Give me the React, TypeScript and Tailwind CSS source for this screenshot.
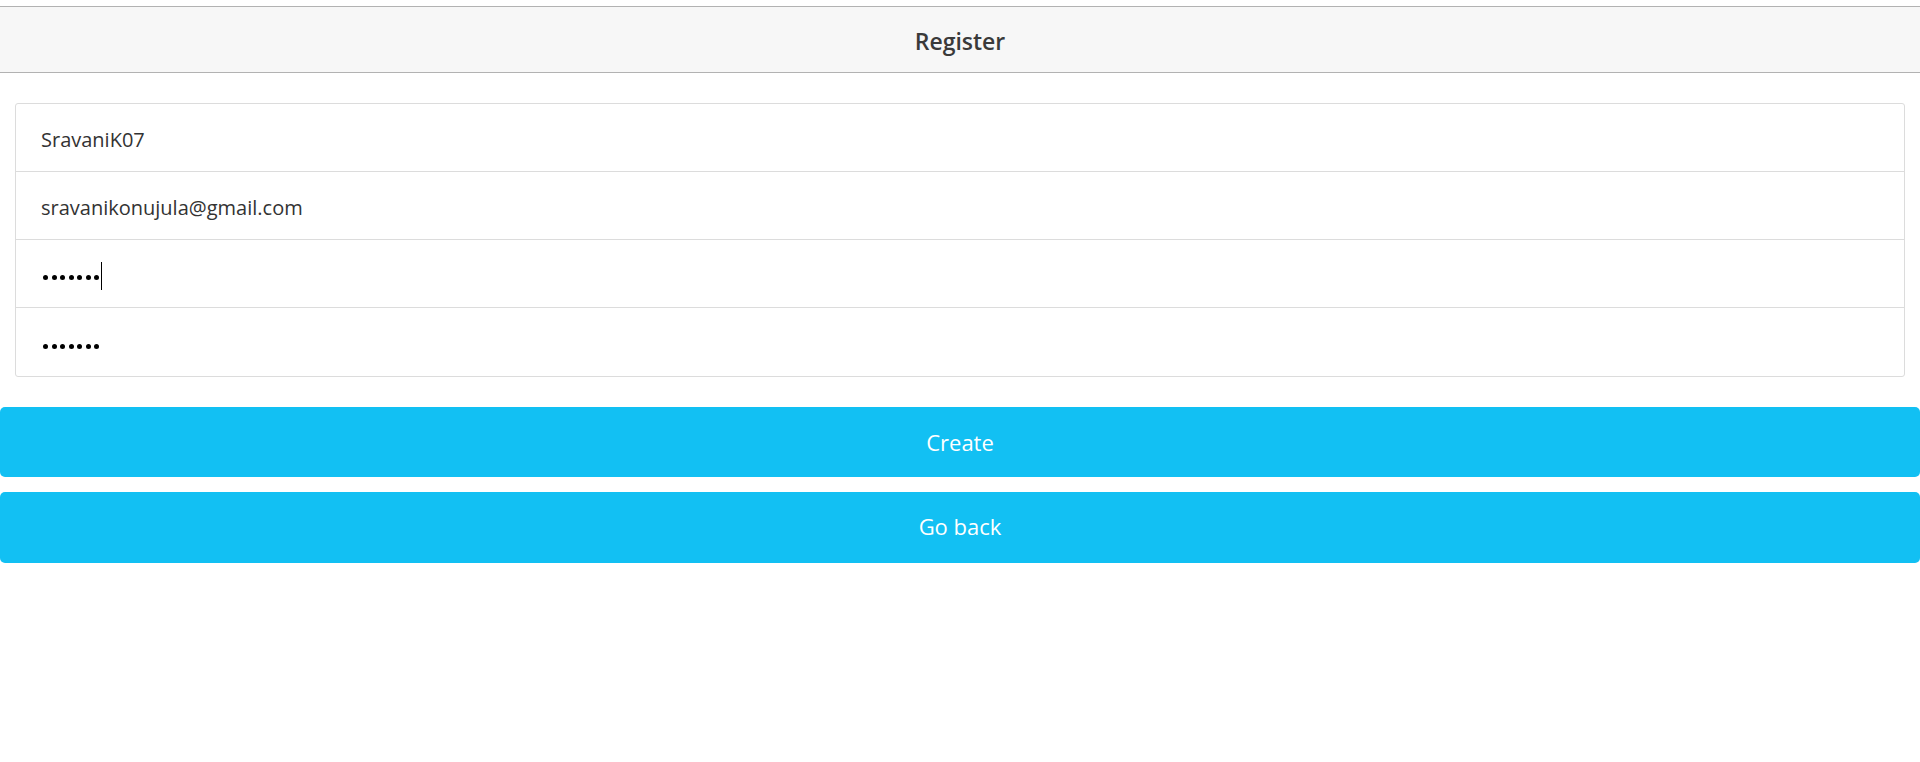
import React from "react";

function Dots({ caret }: { caret?: boolean }) {
  return (
    <div className="flex items-center mt-[8px]">
      <div className="flex items-center gap-[3.5px] ml-[1px]">
        {[0, 1, 2, 3, 4, 5, 6].map((i) => (
          <span key={i} className="block w-[5px] h-[5px] rounded-full bg-black"></span>
        ))}
      </div>
      {caret && <span className="block w-[1px] h-[28px] bg-black ml-[2px] -mt-[4px]"></span>}
    </div>
  );
}

export default function App() {
  return (
    <div className="min-h-[762px] bg-white pt-[6px] font-['Open_Sans',_'Noto_Sans',_sans-serif]">
      <div className="h-[67px] border-y border-[#b2b2b2] bg-[#f7f7f7] flex items-center justify-center">
        <span className="text-[23px] font-semibold text-[#3a3a3a] leading-none pt-[4px]">Register</span>
      </div>
      <div className="px-[15px] pt-[30px]">
        <div className="border border-[#dcdcdc] rounded-[3px] bg-white">
          <div className="h-[67px] flex items-center pl-[25px] pt-[4px] text-[20px] text-[#333]">SravaniK07</div>
          <div className="h-[68px] border-t border-[#dcdcdc] flex items-center pl-[25px] pt-[4px] text-[20px] text-[#333]">sravanikonujula@gmail.com</div>
          <div className="h-[68px] border-t border-[#dcdcdc] flex items-center pl-[26px]">
            <Dots caret />
          </div>
          <div className="h-[69px] border-t border-[#dcdcdc] flex items-center pl-[26px]">
            <Dots />
          </div>
        </div>
      </div>
      <div className="pt-[30px] flex flex-col gap-[15px]">
        <button className="h-[70px] w-full rounded-[5px] bg-[#12c0f3] text-white text-[22px] flex items-center justify-center">Create</button>
        <button className="h-[71px] w-full rounded-[5px] bg-[#12c0f3] text-white text-[22px] pb-[3px] flex items-center justify-center">Go back</button>
      </div>
    </div>
  );
}
